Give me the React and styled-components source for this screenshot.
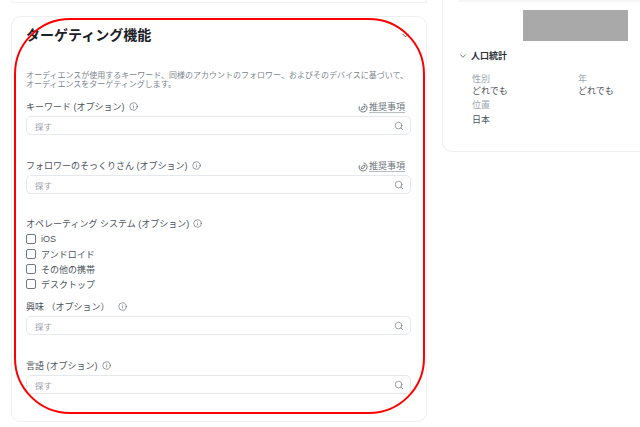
import React from "react";
import styled, { createGlobalStyle } from "styled-components";
import { Search, ChevronDown, Info } from "lucide-react";

const GlobalStyle = createGlobalStyle`
  html, body {
    margin: 0;
    padding: 0;
    background: #fff;
    overflow: hidden;
  }
  body {
    font-family: "Liberation Sans", "Noto Sans CJK JP", sans-serif;
    color: #3d4650;
  }
`;

const Page = styled.div`
  position: relative;
  width: 640px;
  height: 427px;
  overflow: hidden;
  display: flex;
  align-items: flex-start;
  gap: 15px;
  padding-left: 11px;
  box-sizing: border-box;
`;

const LeftColumn = styled.div`
  flex: none;
  width: 416px;
  display: flex;
  flex-direction: column;
  gap: 13px;
`;

const TopCardEdge = styled.div`
  height: 2px;
  border: 1px solid #f0f1f3;
  border-top: none;
  border-radius: 0 0 8px 8px;
`;

const Card = styled.section`
  height: 406px;
  box-sizing: border-box;
  border: 1px solid #eff0f2;
  border-radius: 10px;
  padding: 8px 15px 0 14px;
`;

const CardHeader = styled.div`
  display: flex;
  justify-content: space-between;
  align-items: center;
  height: 20px;
  color: #1b2026;
`;

const CardTitle = styled.h2`
  margin: 0;
  font-size: 14px;
  font-weight: 700;
  line-height: 20px;
`;

const Intro = styled.p`
  margin: 27px 0 0;
  font-size: 8px;
  line-height: 8.5px;
  color: #7b858f;
  white-space: nowrap;
`;

const Field = styled.div`
  margin-top: ${(p) => p.$top}px;
`;

const LabelRow = styled.div`
  display: flex;
  justify-content: space-between;
  align-items: center;
  height: 14px;
  margin-bottom: 3px;
`;

const Label = styled.div`
  display: flex;
  align-items: center;
  gap: ${(p) => p.$gap || 4}px;
  font-size: 9px;
  color: #4c545d;
`;

const Hint = styled.a`
  display: flex;
  align-items: center;
  gap: 1px;
  margin: 3px 6px 0 0;
  font-size: 9px;
  color: #6d7680;
`;

const HintText = styled.span`
  border-bottom: 1px solid #b6bcc2;
  line-height: 10px;
`;

const SearchBox = styled.div`
  height: 19px;
  box-sizing: border-box;
  border: 1px solid #e5e8ec;
  border-radius: 5px;
  display: flex;
  justify-content: space-between;
  align-items: center;
  padding: 0 6px 0 8px;
  font-size: 8.5px;
  color: #9aa2aa;
`;

const CheckList = styled.div`
  display: flex;
  flex-direction: column;
  gap: 5px;
  margin-top: 4px;
`;

const CheckRow = styled.label`
  display: flex;
  align-items: center;
  gap: 5px;
  height: 10px;
  font-size: 9px;
  color: #4c545d;
`;

const CheckBox = styled.span`
  width: 8px;
  height: 8px;
  border: 1px solid #6f7780;
  border-radius: 2px;
  flex: none;
`;

const SideCard = styled.aside`
  flex: none;
  width: 198px;
  height: 152px;
  box-sizing: border-box;
  border: 1px solid #eff0f2;
  border-top: none;
  border-right: none;
  border-radius: 0 0 0 10px;
  padding: 0 0 0 15px;
`;

const SideRule = styled.div`
  height: 2px;
  background: #f6f6f7;
`;

const Redacted = styled.div`
  width: 105px;
  height: 31px;
  margin: 8px 0 0 65px;
  background: #a9a9a9;
`;

const DemoHeading = styled.h3`
  display: flex;
  align-items: center;
  gap: 3px;
  margin: 9px 0 0;
  font-size: 9px;
  font-weight: 700;
  line-height: 12px;
  color: #2a3037;
`;

const DemoGrid = styled.div`
  display: grid;
  grid-template-columns: 106px 60px;
  margin: 11px 0 0 14px;
`;

const DemoKey = styled.div`
  font-size: 9px;
  line-height: 12px;
  color: #a0a8b0;
`;

const DemoValue = styled.div`
  font-size: 9px;
  line-height: 12px;
  color: #4c545d;
`;

const PlainBlock = styled.div`
  margin: 2px 0 0 14px;
`;

const PlainValue = styled(DemoValue)`
  margin-top: 3px;
`;

// the hand-drawn annotation lying over the screenshot
const RedOutline = styled.div`
  position: absolute;
  left: 14px;
  top: 18px;
  width: 411px;
  height: 396px;
  box-sizing: border-box;
  border: 2px solid #ff0000;
  border-radius: 56px;
  pointer-events: none;
`;

function SuggestIcon() {
  return (
    <svg width="10" height="10" viewBox="0 0 10 10" fill="none" stroke="#6d7680" strokeWidth="1">
      <path d="M5.5 1 A4 4 0 1 1 1.4 3.4" />
      <path d="M3.2 6.6 C3 4.6 4.6 3.4 7 3.2 C7 5.4 5.4 6.8 3.2 6.6 Z" />
    </svg>
  );
}

function SearchField({ label, top, hint, gap }) {
  return (
    <Field $top={top}>
      <LabelRow>
        <Label $gap={gap}>
          {label}
          <Info size={9} strokeWidth={1.5} />
        </Label>
        {hint && (
          <Hint>
            <SuggestIcon />
            <HintText>推奨事項</HintText>
          </Hint>
        )}
      </LabelRow>
      <SearchBox>
        探す
        <Search size={10} strokeWidth={1.5} color="#5f6a75" />
      </SearchBox>
    </Field>
  );
}

export default function App() {
  const systems = ["iOS", "アンドロイド", "その他の携帯", "デスクトップ"];

  return (
    <Page>
      <GlobalStyle />
      <LeftColumn>
        <TopCardEdge />
        <Card>
          <CardHeader>
            <CardTitle>ターゲティング機能</CardTitle>
            <ChevronDown size={11} strokeWidth={1.5} />
          </CardHeader>
          <Intro>
            オーディエンスが使用するキーワード、同様のアカウントのフォロワー、およびそのデバイスに基づいて、
            <br />
            オーディエンスをターゲティングします。
          </Intro>
          <SearchField label="キーワード (オプション)" top={10} hint />
          <SearchField label="フォロワーのそっくりさん (オプション)" top={23} hint />
          <Field $top={22}>
            <LabelRow>
              <Label>
                オペレーティング システム (オプション)
                <Info size={9} strokeWidth={1.5} />
              </Label>
            </LabelRow>
            <CheckList>
              {systems.map((name) => (
                <CheckRow key={name}>
                  <CheckBox />
                  {name}
                </CheckRow>
              ))}
            </CheckList>
          </Field>
          <SearchField label="興味 （オプション）" top={10} gap={8} />
          <SearchField label="言語 (オプション)" top={23} />
        </Card>
      </LeftColumn>
      <SideCard>
        <SideRule />
        <Redacted />
        <DemoHeading>
          <ChevronDown size={10} strokeWidth={1.5} />
          人口統計
        </DemoHeading>
        <DemoGrid>
          <DemoKey>性別</DemoKey>
          <DemoKey>年</DemoKey>
          <DemoValue>どれでも</DemoValue>
          <DemoValue>どれでも</DemoValue>
        </DemoGrid>
        <PlainBlock>
          <DemoKey>位置</DemoKey>
          <PlainValue>日本</PlainValue>
        </PlainBlock>
      </SideCard>
      <RedOutline />
    </Page>
  );
}
